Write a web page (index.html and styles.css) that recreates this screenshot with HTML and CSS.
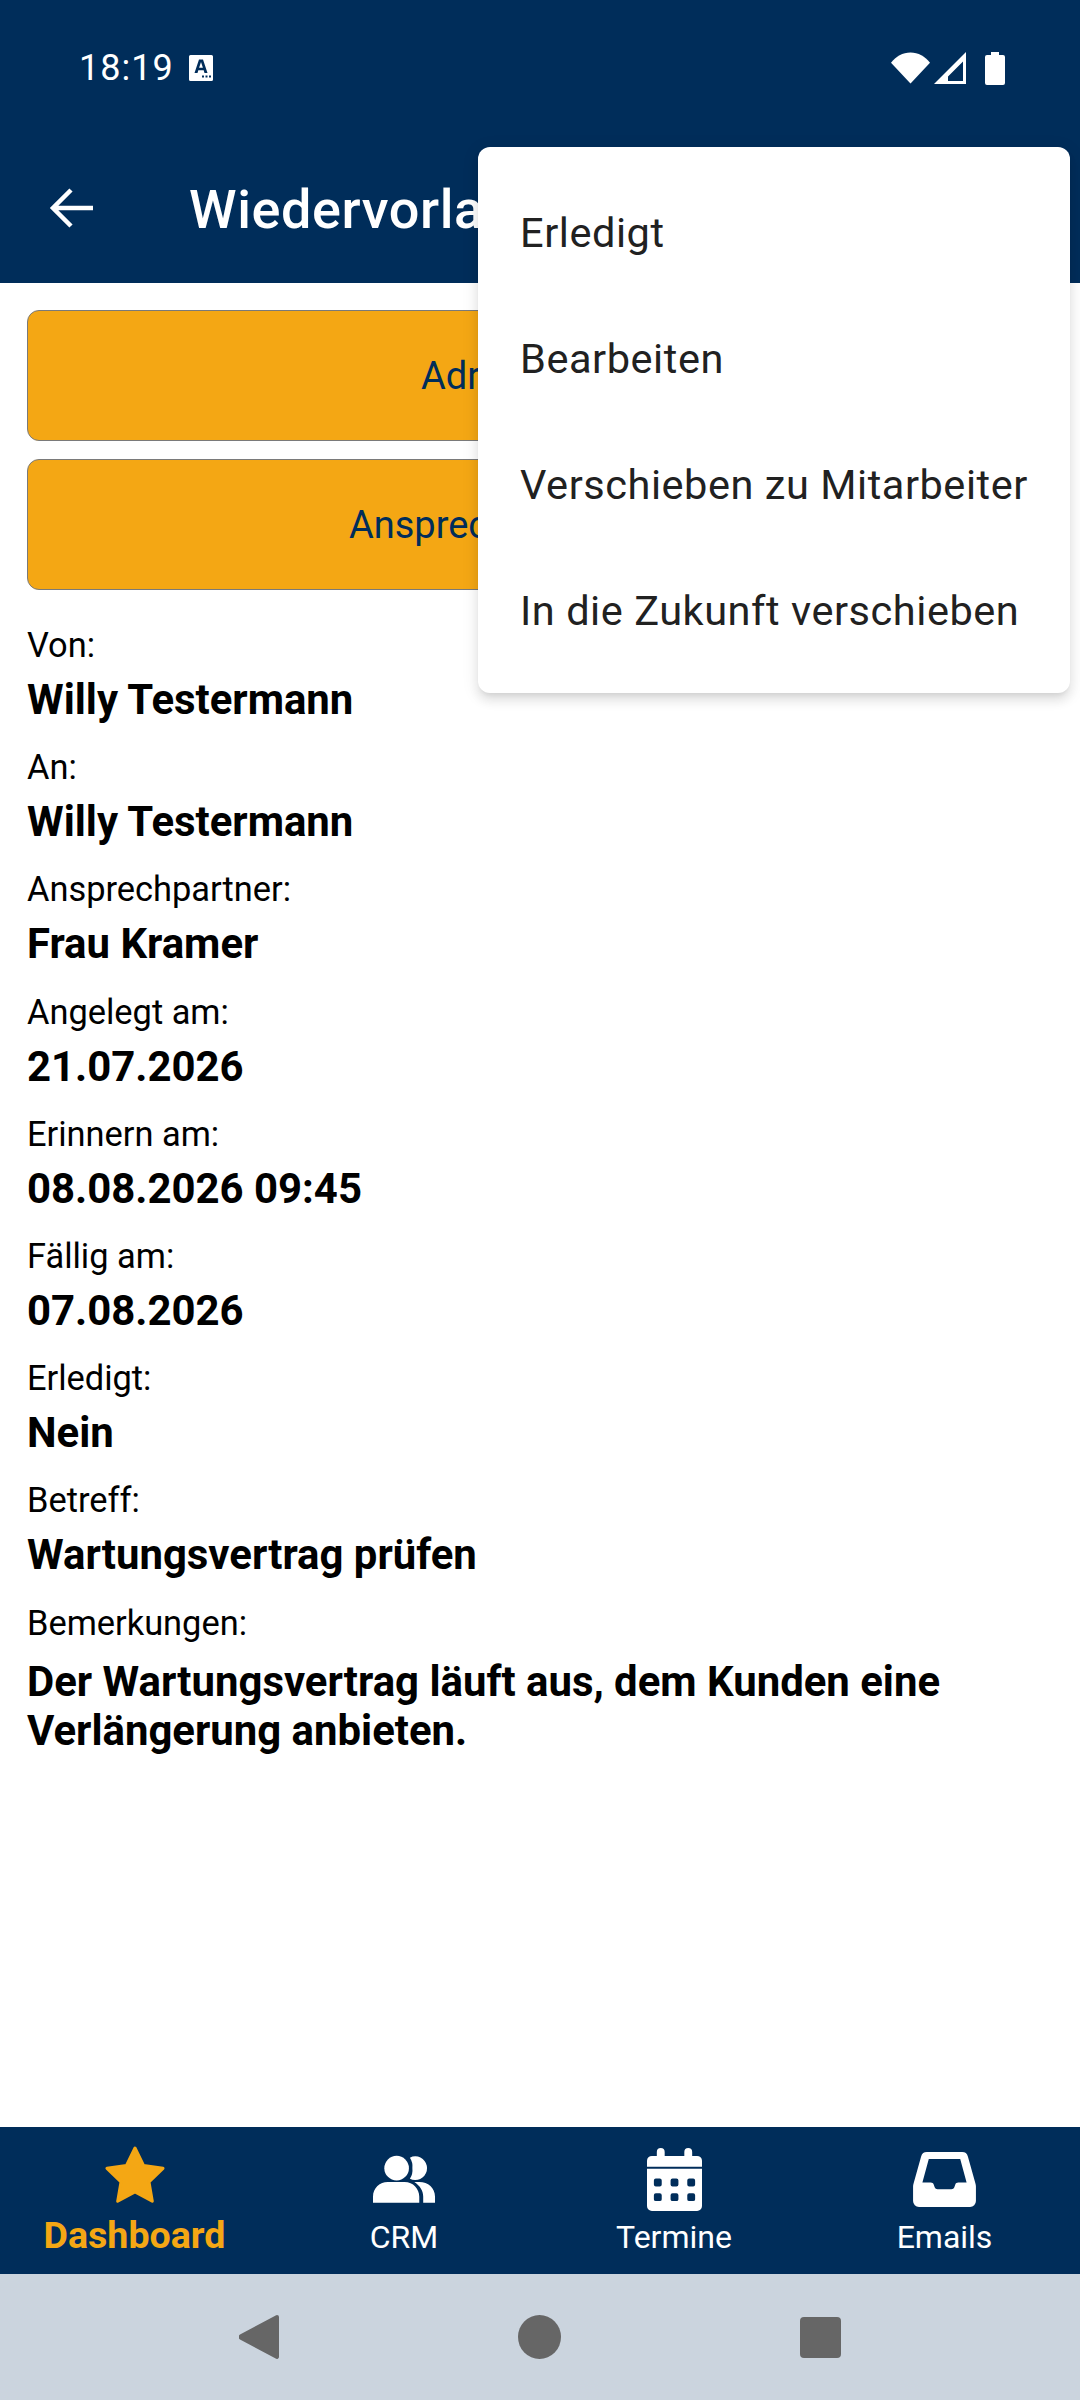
FILE: index.html
```html
<!DOCTYPE html>
<html lang="de">
<head>
    <meta charset="UTF-8">
    <meta name="viewport" content="width=device-width, initial-scale=1.0">
    <title>Wiedervorlage</title>
    <link rel="stylesheet" href="styles.css">
</head>
<body>
    <div class="screen">
        <!-- Kopfbereich -->
        <header class="top">
            <div class="status-bar">
                <div class="status-left">
                    <span class="clock">18:19</span>
                    <svg class="a-icon" viewBox="0 0 24 26"><path fill="#fff" fill-rule="evenodd" d="M1.500 0h21A1.500 1.500 0 0 1 24 1.500v23a1.500 1.500 0 0 1-1.500 1.500h-21A1.500 1.500 0 0 1 0 24.500v-23A1.500 1.500 0 0 1 1.500 0zM10 4.500 5.500 18h3l.8-2.800h5.400l.8 2.800h3L14 4.500zm.1 8.300 1.900-5.800 1.900 5.800zM13 20.500h2v2h-2zm3.500 0h2v2h-2zm3.500 0h2v2h-2z"/></svg>
                </div>
                <div class="status-right">
                    <svg class="wifi" viewBox="0 0 40 32"><path fill="#fff" d="M0 10.500C5 4 12 0 20 0s15 4 20 10.500L20 32z"/></svg>
                    <svg class="signal" viewBox="0 0 32 32"><path fill="#fff" fill-rule="evenodd" d="M32 0v32H0zM29 9.500 14 24.500V29h15z"/></svg>
                    <svg class="battery" viewBox="0 0 20 33"><path fill="#fff" d="M6 0h8v3h4a2 2 0 0 1 2 2v26a2 2 0 0 1-2 2H2a2 2 0 0 1-2-2V5a2 2 0 0 1 2-2h4z"/></svg>
                </div>
            </div>
            <div class="app-bar">
                <svg class="back" viewBox="0 0 44 40"><path fill="none" stroke="#fff" stroke-width="4.500" d="M44 20H4M22 2 4 20l18 18"/></svg>
                <h1>Wiedervorlage</h1>
            </div>
        </header>

        <!-- Inhalt -->
        <main class="content">
            <button class="btn">Adresse öffnen</button>
            <button class="btn">Ansprechpartner öffnen</button>

            <div class="field"><span>Von:</span><strong>Willy Testermann</strong></div>
            <div class="field"><span>An:</span><strong>Willy Testermann</strong></div>
            <div class="field"><span>Ansprechpartner:</span><strong>Frau Kramer</strong></div>
            <div class="field"><span>Angelegt am:</span><strong>21.07.2026</strong></div>
            <div class="field"><span>Erinnern am:</span><strong>08.08.2026 09:45</strong></div>
            <div class="field"><span>Fällig am:</span><strong>07.08.2026</strong></div>
            <div class="field"><span>Erledigt:</span><strong>Nein</strong></div>
            <div class="field"><span>Betreff:</span><strong>Wartungsvertrag prüfen</strong></div>
            <div class="field field-long"><span>Bemerkungen:</span><strong>Der Wartungsvertrag läuft aus, dem Kunden eine Verlängerung anbieten.</strong></div>
        </main>

        <!-- Tabs -->
        <nav class="tabs">
            <div class="tab tab-active">
                <div class="tab-icon">
                    <svg class="icon-star" viewBox="0 0 60 58"><path fill="#f4a714" stroke="#f4a714" stroke-width="3" stroke-linejoin="round" d="M30 2l8.500 17.500 19.500 2.800-14 13.600 3.300 19.300L30 46l-17.300 9.200L16 35.900 2 22.300l19.500-2.800z"/></svg>
                </div>
                <span>Dashboard</span>
            </div>
            <div class="tab">
                <div class="tab-icon">
                    <svg class="icon-crm" viewBox="0 0 64 48"><circle cx="24" cy="13" r="12.500" fill="#fff"/><path fill="#fff" fill-rule="evenodd" d="M43 1a12 12 0 1 1-5.500 22.700A16 16 0 0 0 40 13a16 16 0 0 0-2.500-10.700A12 12 0 0 1 43 1z"/><path fill="#fff" d="M0 48v-6c0-9 7-15 15-15h17c9 0 15 7 15 15v6zM42 27h5c9 0 16 6 16 15v6H51v-6c0-6-3-11-9-15z"/></svg>
                </div>
                <span>CRM</span>
            </div>
            <div class="tab">
                <div class="tab-icon">
                    <svg class="icon-cal" viewBox="0 0 56 64"><path fill="#fff" fill-rule="evenodd" d="M14 0a4 4 0 0 1 4 4v4h20V4a4 4 0 0 1 8 0v4h5a5 5 0 0 1 5 5v6H0v-6a5 5 0 0 1 5-5h5V4a4 4 0 0 1 4-4zM0 21h56v38a5 5 0 0 1-5 5H5a5 5 0 0 1-5-5zm9 10a2 2 0 0 0-2 2v4a2 2 0 0 0 2 2h4a2 2 0 0 0 2-2v-4a2 2 0 0 0-2-2zm17 0a2 2 0 0 0-2 2v4a2 2 0 0 0 2 2h4a2 2 0 0 0 2-2v-4a2 2 0 0 0-2-2zm17 0a2 2 0 0 0-2 2v4a2 2 0 0 0 2 2h4a2 2 0 0 0 2-2v-4a2 2 0 0 0-2-2zM9 46a2 2 0 0 0-2 2v4a2 2 0 0 0 2 2h4a2 2 0 0 0 2-2v-4a2 2 0 0 0-2-2zm17 0a2 2 0 0 0-2 2v4a2 2 0 0 0 2 2h4a2 2 0 0 0 2-2v-4a2 2 0 0 0-2-2zm17 0a2 2 0 0 0-2 2v4a2 2 0 0 0 2 2h4a2 2 0 0 0 2-2v-4a2 2 0 0 0-2-2z"/></svg>
                </div>
                <span>Termine</span>
            </div>
            <div class="tab">
                <div class="tab-icon">
                    <svg class="icon-inbox" viewBox="0 0 64 56"><path fill="#fff" fill-rule="evenodd" d="M14 0h36a6 6 0 0 1 5.800 4.500L63.500 32c.3 1 .5 2 .5 3v15a6 6 0 0 1-6 6H6a6 6 0 0 1-6-6V35c0-1 .2-2 .5-3L8.200 4.500A6 6 0 0 1 14 0zm2 7L9.500 31H18c1.500 0 2.500.7 3 2l1 3c.5 1.300 1.500 2 3 2h14c1.500 0 2.500-.7 3-2l1-3c.5-1.300 1.500-2 3-2h8.500L48 7z"/></svg>
                </div>
                <span>Emails</span>
            </div>
        </nav>

        <!-- Android Navigation -->
        <div class="system-nav">
            <svg class="sys-back" viewBox="0 0 40 44"><path fill="#666" d="M38 0a2 2 0 0 1 2 2v40a2 2 0 0 1-3.300 1.500L1 24.500a3 3 0 0 1 0-5L36.700.5A2 2 0 0 1 38 0z"/></svg>
            <div class="sys-home"></div>
            <div class="sys-recent"></div>
        </div>

        <!-- Overflow-Menue -->
        <div class="menu">
            <div class="menu-item">Erledigt</div>
            <div class="menu-item">Bearbeiten</div>
            <div class="menu-item">Verschieben zu Mitarbeiter</div>
            <div class="menu-item">In die Zukunft verschieben</div>
        </div>
    </div>
</body>
</html>
```

FILE: styles.css
```css
:root {
    --navy: #002d5a;
    --amber: #f4a714;
}

* {
    box-sizing: border-box;
    margin: 0;
    padding: 0;
    font-family: 'Roboto', sans-serif;
}

body {
    background: white;
}

.screen {
    position: relative;
    width: 1080px;
    height: 2400px;
    display: flex;
    flex-direction: column;
    overflow: hidden;
}

/* Kopfbereich */
.top {
    height: 283px;
    background: var(--navy);
    color: white;
}

.status-bar {
    height: 136px;
    padding: 0 75px 0 79px;
    display: flex;
    justify-content: space-between;
    align-items: center;
}

.status-left {
    display: flex;
    align-items: center;
    gap: 15px;
}

.clock {
    font-size: 36px;
    letter-spacing: 1px;
}

.a-icon {
    width: 24px;
    height: 26px;
}

.status-right {
    display: flex;
    align-items: center;
}

.wifi {
    width: 39px;
    height: 32px;
}

.signal {
    width: 32px;
    height: 32px;
    margin-left: 4px;
}

.battery {
    width: 20px;
    height: 33px;
    margin-left: 19px;
}

.app-bar {
    height: 147px;
    padding-left: 49px;
    display: flex;
    align-items: center;
}

.back {
    width: 44px;
    height: 40px;
    margin-top: -4px;
}

.app-bar h1 {
    margin-left: 96px;
    font-size: 54px;
    font-weight: 500;
    letter-spacing: 0.6px;
    white-space: nowrap;
}

/* Inhalt */
.content {
    flex: 1;
    padding: 27px 27px 0;
    color: black;
}

.btn {
    display: block;
    width: 100%;
    height: 131px;
    margin-bottom: 18px;
    padding-left: 20px;
    background: var(--amber);
    border: 1.5px solid #7a7a7a;
    border-radius: 12px;
    color: var(--navy);
    font-size: 38px;
}

.field {
    height: 122.2px;
}

.field span {
    display: block;
    font-size: 34.4px;
    line-height: 44px;
    padding-top: 15px;
}

.field strong {
    display: block;
    font-size: 41.9px;
    font-weight: 700;
    line-height: 49px;
    margin-top: 8px;
}

.field-long strong {
    margin-top: 12px;
}

/* Tabs */
.tabs {
    height: 147px;
    background: var(--navy);
    display: grid;
    grid-template-columns: 269px 270px 270px 271px;
}

.tab {
    padding-top: 17px;
    display: flex;
    flex-direction: column;
    align-items: center;
    color: white;
    font-size: 32px;
}

.tab-icon {
    height: 70px;
    display: flex;
    align-items: center;
    justify-content: center;
    margin-bottom: 4px;
}

.icon-star {
    width: 60px;
    height: 58px;
    margin-top: -9px;
}

.icon-crm {
    width: 63px;
    height: 48px;
}

.icon-cal {
    width: 55px;
    height: 63px;
}

.icon-inbox {
    width: 63px;
    height: 55px;
}

.tab-active {
    color: var(--amber);
    font-size: 37.6px;
    font-weight: 700;
}

.tab-active span {
    margin-top: -5px;
}

/* Android Navigation */
.system-nav {
    height: 126px;
    background: #cbd4de;
    display: flex;
    align-items: center;
    justify-content: center;
}

.sys-back {
    width: 40px;
    height: 44px;
}

.sys-home {
    width: 43px;
    height: 44px;
    margin-left: 239px;
    border-radius: 50%;
    background: #666;
}

.sys-recent {
    width: 41px;
    height: 41px;
    margin-left: 239px;
    border-radius: 4px;
    background: #666;
}

/* Overflow-Menue */
.menu {
    position: absolute;
    top: 147px;
    left: 478px;
    width: 592px;
    padding: 21px 0;
    background: white;
    border-radius: 12px;
    box-shadow: 0 5px 5px -3px rgba(0,0,0,0.08), 0 8px 10px 1px rgba(0,0,0,0.06), 0 3px 16px 2px rgba(0,0,0,0.08);
}

.menu-item {
    height: 126px;
    padding-left: 42px;
    padding-top: 2px;
    display: flex;
    align-items: center;
    font-size: 41.5px;
    letter-spacing: 0.55px;
    color: #212121;
    white-space: nowrap;
}
```
